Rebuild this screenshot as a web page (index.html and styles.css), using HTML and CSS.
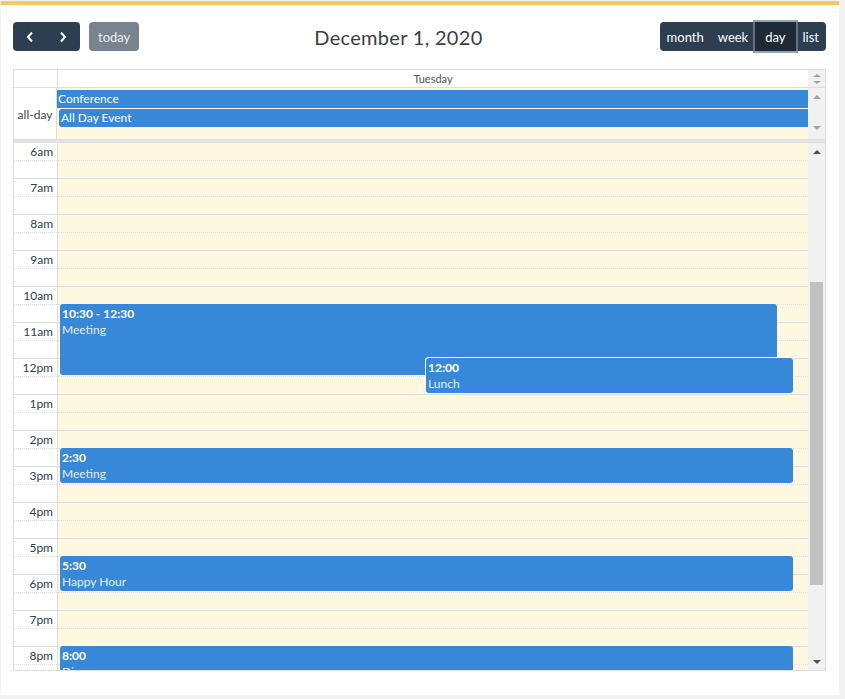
FILE: index.html
```html
<!DOCTYPE html>
<html lang="en">
<head>
    <meta charset="UTF-8">
    <meta name="viewport" content="width=device-width, initial-scale=1.0">
    <title>Calendar - Day</title>
    <link rel="stylesheet" href="styles.css">
</head>
<body>

<div class="page">
    <div class="toolbar">
        <div class="toolbar-left">
            <div class="btn-group">
                <button class="btn btn-icon" aria-label="prev">
                    <svg width="10" height="12" viewBox="0 0 10 12"><polyline points="7,1.5 3,6 7,10.5" fill="none" stroke="#fff" stroke-width="2"/></svg>
                </button>
                <button class="btn btn-icon" aria-label="next">
                    <svg width="10" height="12" viewBox="0 0 10 12"><polyline points="3,1.5 7,6 3,10.5" fill="none" stroke="#fff" stroke-width="2"/></svg>
                </button>
            </div>
            <button class="btn btn-today" disabled>today</button>
        </div>
        <h2 class="title">December 1, 2020</h2>
        <div class="btn-group">
            <button class="btn">month</button>
            <button class="btn">week</button>
            <button class="btn active">day</button>
            <button class="btn">list</button>
        </div>
    </div>

    <div class="cal">
        <!-- en üst: gün başlığı -->
        <div class="cal-head">
            <div class="axis"></div>
            <div class="day-name">Tuesday</div>
            <div class="gutter gutter-head">
                <span class="arr-up small light"></span>
                <span class="arr-down small light"></span>
            </div>
        </div>

        <!-- tüm gün olayları -->
        <div class="cal-allday">
            <div class="axis allday-label">all-day</div>
            <div class="allday-lane">
                <div class="allday-event cont">Conference</div>
                <div class="allday-event">All Day Event</div>
            </div>
            <div class="gutter gutter-allday">
                <span class="arr-up light"></span>
                <span class="arr-down light"></span>
            </div>
        </div>

        <div class="divider"></div>

        <!-- saatler -->
        <div class="cal-body">
            <div class="axis">
                <div class="slot"><span>6am</span></div><div class="slot"></div>
                <div class="slot"><span>7am</span></div><div class="slot"></div>
                <div class="slot"><span>8am</span></div><div class="slot"></div>
                <div class="slot"><span>9am</span></div><div class="slot"></div>
                <div class="slot"><span>10am</span></div><div class="slot"></div>
                <div class="slot"><span>11am</span></div><div class="slot"></div>
                <div class="slot"><span>12pm</span></div><div class="slot"></div>
                <div class="slot"><span>1pm</span></div><div class="slot"></div>
                <div class="slot"><span>2pm</span></div><div class="slot"></div>
                <div class="slot"><span>3pm</span></div><div class="slot"></div>
                <div class="slot"><span>4pm</span></div><div class="slot"></div>
                <div class="slot"><span>5pm</span></div><div class="slot"></div>
                <div class="slot"><span>6pm</span></div><div class="slot"></div>
                <div class="slot"><span>7pm</span></div><div class="slot"></div>
                <div class="slot"><span>8pm</span></div><div class="slot"></div>
            </div>
            <div class="lane">
                <div class="slot"></div><div class="slot"></div>
                <div class="slot"></div><div class="slot"></div>
                <div class="slot"></div><div class="slot"></div>
                <div class="slot"></div><div class="slot"></div>
                <div class="slot"></div><div class="slot"></div>
                <div class="slot"></div><div class="slot"></div>
                <div class="slot"></div><div class="slot"></div>
                <div class="slot"></div><div class="slot"></div>
                <div class="slot"></div><div class="slot"></div>
                <div class="slot"></div><div class="slot"></div>
                <div class="slot"></div><div class="slot"></div>
                <div class="slot"></div><div class="slot"></div>
                <div class="slot"></div><div class="slot"></div>
                <div class="slot"></div><div class="slot"></div>
                <div class="slot"></div><div class="slot"></div>

                <div class="event ev-meeting1">
                    <div class="ev-time">10:30 - 12:30</div>
                    <div class="ev-title">Meeting</div>
                </div>
                <div class="event ev-lunch">
                    <div class="ev-time">12:00</div>
                    <div class="ev-title">Lunch</div>
                </div>
                <div class="event ev-meeting2">
                    <div class="ev-time">2:30</div>
                    <div class="ev-title">Meeting</div>
                </div>
                <div class="event ev-happy">
                    <div class="ev-time">5:30</div>
                    <div class="ev-title">Happy Hour</div>
                </div>
                <div class="event ev-dinner">
                    <div class="ev-time">8:00</div>
                    <div class="ev-title">Dinner</div>
                </div>
            </div>
            <div class="gutter gutter-body">
                <div class="arrow-box"><span class="arr-up"></span></div>
                <div class="track"><div class="thumb"></div></div>
                <div class="arrow-box"><span class="arr-down"></span></div>
            </div>
        </div>
    </div>
</div>

</body>
</html>
```

FILE: styles.css
```css
body {
    margin: 0;
    padding: 0;
    background-color: #f3f3f3;
    font-family: Lato, "Open Sans", sans-serif;
}

.page {
    background-color: #fff;
    margin: 1px 6px 4px 1px;
    border-top: 4px solid #f9c75e;
    padding: 17px 13px 24px 12px;
}

/* Üst araç çubuğu */
.toolbar {
    display: flex;
    justify-content: space-between;
    align-items: center;
    height: 29px;
    margin-bottom: 18px;
}

.toolbar-left {
    display: flex;
    gap: 9px;
}

.title {
    margin: 0;
    font-size: 20px;
    font-weight: normal;
    color: #3a3e42;
    letter-spacing: 0.3px;
    padding-right: 2px;
}

.btn-group {
    display: flex;
    background-color: #2c3e50;
    border-radius: 4px;
}

.btn {
    background: transparent;
    border: none;
    color: #fff;
    font-family: Lato, "Open Sans", sans-serif;
    font-size: 13px;
    height: 29px;
    padding: 0 7px;
    border-radius: 4px;
    cursor: pointer;
}

.btn-icon {
    width: 33.5px;
    padding: 0;
    display: flex;
    align-items: center;
    justify-content: center;
}

.btn-today {
    background-color: #77838e;
    color: #eef0f2;
    padding: 0 9px;
}

.btn.active {
    background-color: #1e2b37;
    border-radius: 0;
    box-shadow: 0 0 0 2px rgba(120, 132, 145, 0.75);
    position: relative;
    padding: 0 10px;
}

/* Takvim ızgarası */
.cal {
    border: 1px solid #ddd;
    height: 600px;
    display: flex;
    flex-direction: column;
    color: #2c3e50;
}

.cal-head {
    display: flex;
    height: 17px;
    border-bottom: 1px solid #ddd;
}

.axis {
    width: 43px;
    border-right: 1px solid #ddd;
    flex-shrink: 0;
}

.day-name {
    flex: 1;
    text-align: center;
    font-size: 11px;
    line-height: 17px;
    color: #555;
}

.gutter {
    width: 17px;
    flex-shrink: 0;
    background-color: #f1f1f1;
}

.gutter-head {
    display: flex;
    flex-direction: column;
    align-items: center;
    justify-content: center;
    gap: 4px;
}

.cal-allday {
    display: flex;
    height: 51px;
    border-bottom: 1px solid #ddd;
}

.allday-label {
    font-size: 12px;
    color: #444;
    display: flex;
    align-items: center;
    justify-content: center;
    padding-top: 1px;
    box-sizing: border-box;
}

.allday-lane {
    flex: 1;
    background-color: #fef8e0;
    padding-top: 2px;
}

.allday-event {
    background-color: #3788d8;
    color: #fff;
    font-size: 12px;
    height: 18px;
    line-height: 18px;
    margin: 1px 0 0 2px;
    padding-left: 2px;
    border-radius: 3px 0 0 3px;
}

.allday-event.cont {
    margin: 0;
    padding-left: 1px;
    border-radius: 0;
}

.gutter-allday {
    display: flex;
    flex-direction: column;
    align-items: center;
    justify-content: space-between;
    padding: 7px 0 9px;
    box-sizing: border-box;
}

.divider {
    height: 2px;
    background-color: #e4e4e4;
    border-bottom: 1px solid #ddd;
}

.cal-body {
    flex: 1;
    display: flex;
    overflow: hidden;
}

.slot {
    height: 18px;
    box-sizing: border-box;
    border-bottom: 1px dotted #ddd;
}

.slot:nth-child(even) {
    border-bottom: 1px solid #ddd;
}

.axis .slot span {
    display: block;
    text-align: right;
    padding-right: 4px;
    font-size: 12px;
    line-height: 15px;
    padding-top: 1px;
}

.lane {
    flex: 1;
    position: relative;
    background-color: #fef8e0;
}

/* Olaylar */
.event {
    position: absolute;
    left: 2px;
    width: 733px;
    height: 35px;
    background-color: #3788d8;
    border-radius: 3px;
    color: #fff;
    font-size: 12px;
    line-height: 16px;
    padding: 2px 0 0 2px;
    box-sizing: border-box;
    overflow: hidden;
}

.ev-time {
    font-weight: bold;
}

.ev-title {
    color: #e6effa;
}

.ev-meeting1 {
    top: 161px;
    height: 71px;
    width: 717px;
}

.ev-lunch {
    top: 215px;
    left: 368px;
    width: 367px;
    box-shadow: 0 0 0 1px #fff;
}

.ev-meeting2 {
    top: 305px;
}

.ev-happy {
    top: 413px;
}

.ev-dinner {
    top: 503px;
}

/* Kaydırma çubuğu */
.gutter-body {
    display: flex;
    flex-direction: column;
}

.arrow-box {
    height: 17px;
    display: flex;
    align-items: center;
    justify-content: center;
}

.track {
    flex: 1;
}

.thumb {
    margin: 122px 2px 0;
    height: 303px;
    background-color: #c1c1c1;
}

.arr-up, .arr-down {
    display: block;
    width: 0;
    height: 0;
    border-left: 4px solid transparent;
    border-right: 4px solid transparent;
}

.arr-up {
    border-bottom: 4px solid #505050;
}

.arr-down {
    border-top: 4px solid #505050;
}

.arr-up.light {
    border-bottom-color: #a3a3a3;
}

.arr-down.light {
    border-top-color: #a3a3a3;
}

.arr-up.small {
    border-bottom-width: 3px;
}

.arr-down.small {
    border-top-width: 3px;
}
```
